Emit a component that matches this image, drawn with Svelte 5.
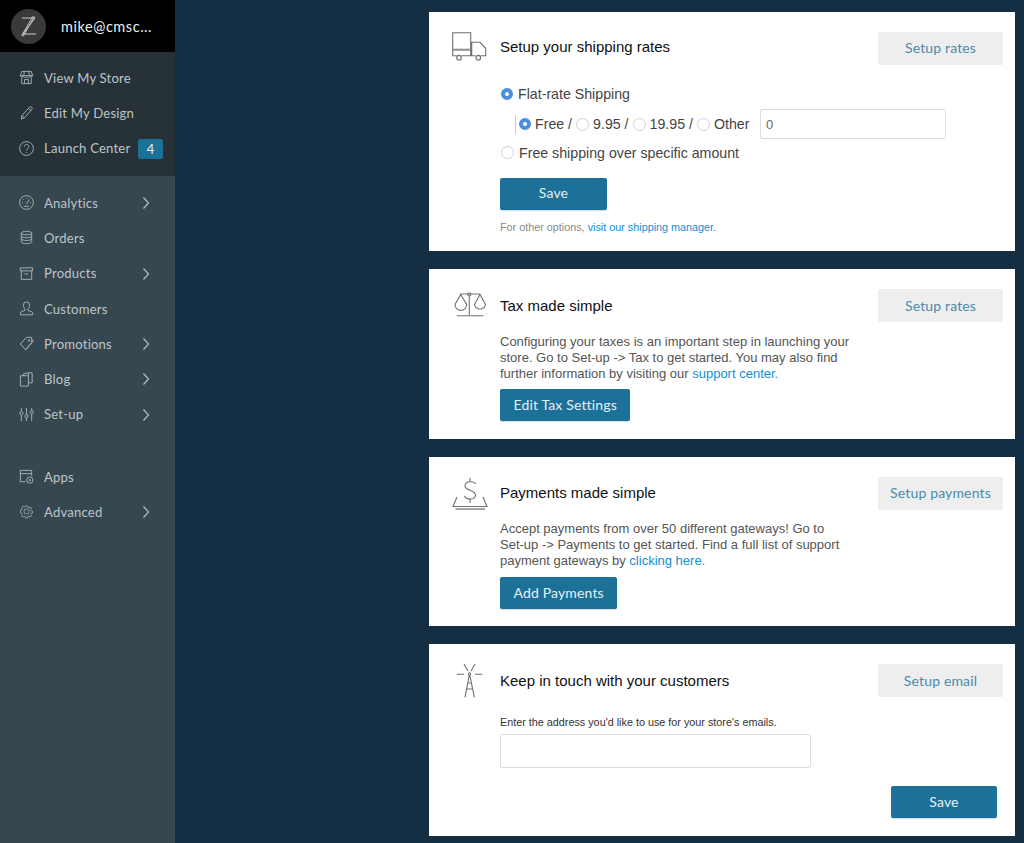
<script>
  const top = [
    { label: 'View My Store', icon: 'store' },
    { label: 'Edit My Design', icon: 'pen' },
    { label: 'Launch Center', icon: 'help', badge: '4' }
  ];
  const mid = [
    { label: 'Analytics', icon: 'gauge', more: true },
    { label: 'Orders', icon: 'db' },
    { label: 'Products', icon: 'box', more: true },
    { label: 'Customers', icon: 'user' },
    { label: 'Promotions', icon: 'tag', more: true },
    { label: 'Blog', icon: 'blog', more: true },
    { label: 'Set-up', icon: 'sliders', more: true }
  ];
  const low = [
    { label: 'Apps', icon: 'apps' },
    { label: 'Advanced', icon: 'gear', more: true }
  ];
  const paths = {
    store: 'M4 2.5h10l1.5 4.5a2 2 0 0 1-3 1 2.2 2.2 0 0 1-3.5 0 2.2 2.2 0 0 1-3.5 0 2 2 0 0 1-3-1zM4 9v6.5h10V9M2.5 7h13M7 15.5V11h4v4.5M6.7 2.5 6 7M11.3 2.5 12 7',
    pen: 'M4 12.5 12 3.5a1.6 1.6 0 0 1 2.6 2.2L7 14.5 3.5 16zM4 12.5l3 2M11 5l3 2.2',
    help: 'M9 1.7a7.3 7.3 0 1 0 0 14.6A7.3 7.3 0 0 0 9 1.7zM6.7 7a2.4 2.4 0 1 1 3.6 2.1c-.9.5-1.3 1-1.3 2M9 12.6v1',
    gauge: 'M9 1.7a7.3 7.3 0 1 0 0 14.6A7.3 7.3 0 0 0 9 1.7zM9 10.5l3-5M9 4v1M4.2 9h1M12.8 9h1M5.5 5.5l.7.7M6.5 13h5',
    db: 'M3.5 4.5C3.5 1.8 14.5 1.8 14.5 4.5v9c0 2.7-11 2.7-11 0zM3.5 4.5c0 2.2 11 2.2 11 0M3.5 7.5c0 2.2 11 2.2 11 0M3.5 10.5c0 2.2 11 2.2 11 0',
    box: 'M2.5 3h13v3.2h-13zM3.5 6.2v9h11v-9M7 9.5h4',
    user: 'M9 2a3.2 3.2 0 0 0-3.2 3.4c0 2 1 3.4 1.7 4v1.5L2.5 13v2.7h13V13l-5-2.1V9.400c.7-.6 1.700-2 1.700-4A3.2 3.2 0 0 0 9 2z',
    tag: 'M2.500 9.500 9 2.500h5.500v5.500l-6.500 7.500zM11.500 5a.8.8 0 1 0 .1 0M14.500 4.500l1.500 2-7 8.500-1.500.8',
    blog: 'M2.500 5h8.500v11H2.500zM6 5V2.800L11 2h4v10.500h-4M11 2v3',
    sliders: 'M3.500 2v4M3.500 9.500V16M9 2v7M9 12.500V16M14.500 2v3M14.500 8.500V16M3.500 6a1.700 1.700 0 1 0 .1 3.400A1.700 1.700 0 0 0 3.500 6zM9 9a1.700 1.700 0 1 0 .1 3.400A1.700 1.700 0 0 0 9 9zM14.500 5a1.700 1.700 0 1 0 .1 3.400A1.700 1.700 0 0 0 14.500 5z',
    apps: 'M8 14.500H2.500V2.500h12v6M2.500 6h12M12.500 9.500a3.300 3.300 0 1 0 .1 6.600 3.300 3.300 0 0 0-.1-6.600zM12.500 12a.8.8 0 1 0 .1 1.600.8.8 0 0 0-.1-1.600z',
    gear: 'M7.800 2h2.400l.4 1.800 1.400.6 1.600-1 1.600 1.700-1 1.500.6 1.500 1.700.4v2.400l-1.700.4-.6 1.400 1 1.600-1.600 1.600-1.600-1-1.400.6-.4 1.700H7.800l-.4-1.700-1.400-.6-1.600 1-1.600-1.600 1-1.600-.6-1.400-1.700-.4V7.500l1.700-.4.600-1.500-1-1.500 1.600-1.700 1.600 1 1.400-.6zM9 5.800a3.200 3.200 0 1 0 .1 6.400A3.200 3.200 0 0 0 9 5.800z'
  };
</script>

{#snippet item(it)}
  <a class="item" href="#top">
    <svg class="ico {it.icon}" viewBox="0 0 18 18"><path d={paths[it.icon]} /></svg>
    <span class="lbl">{it.label}</span>
    {#if it.badge}<span class="badge">{it.badge}</span>{/if}
    {#if it.more}
      <svg class="chev" viewBox="0 0 8 14"><path d="M1.500 1.500 6.500 7l-5 5.500" /></svg>
    {/if}
  </a>
{/snippet}

{#snippet radio(on)}
  <span class="radio" class:on></span>
{/snippet}

<div class="page">
  <aside class="side">
    <div class="head">
      <span class="avatar">
        <svg viewBox="0 0 35 35"><path d="M11 9H24L12 25H25M22 7 10.500 27M23.500 7.500 12 27.500" /></svg>
      </span>
      <span class="mail">mike@cmsc...</span>
    </div>
    <nav class="dark">
      {#each top as it}{@render item(it)}{/each}
    </nav>
    <nav class="mid">
      {#each mid as it}{@render item(it)}{/each}
    </nav>
    <nav class="low">
      {#each low as it}{@render item(it)}{/each}
    </nav>
  </aside>

  <main class="main">
    <section class="card c1">
      <svg class="art" viewBox="0 0 40 30">
        <path d="M2.700.7h18v16.600h-18zM2.700 17.300v6.400h4M11.500 23.700h14M30.800 23.700h4.900v-7.400l-5.700-6h-8.300v13.400M20.700 17.300v6.400" />
        <path class="thick" d="M2.700 18h18" />
        <circle cx="9" cy="25.700" r="2.300" /><circle cx="28.300" cy="25.700" r="2.300" />
      </svg>
      <div class="body">
        <h2>Setup your shipping rates</h2>
        <div class="opts">
          <label class="opt">{@render radio(true)}Flat-rate Shipping</label>
          <div class="sub">
            <div class="rates">
              {@render radio(true)}<span>Free /</span>
              {@render radio(false)}<span>9.95 /</span>
              {@render radio(false)}<span>19.95 /</span>
              {@render radio(false)}<span>Other</span>
            </div>
            <input class="amount" value="0" />
          </div>
          <label class="opt last">{@render radio(false)}Free shipping over specific amount</label>
        </div>
        <button class="primary save1">Save</button>
        <p class="fine">For other options, <a href="#top">visit our shipping manager.</a></p>
      </div>
      <button class="ghost">Setup rates</button>
    </section>

    <section class="card c2">
      <svg class="art" viewBox="0 0 40 30">
        <path d="M10 3h20M19.300 4.500V24M6.700 24.700h26.600M10.700 3.500 5 13.500a5.800 5.800 0 0 0 11.700 0zM30 3.500l-5.500 10a5.600 5.600 0 0 0 11 0z" />
        <circle cx="19.300" cy="3.500" r="1.500" />
      </svg>
      <div class="body">
        <h2>Tax made simple</h2>
        <p class="copy">Configuring your taxes is an important step in launching your store. Go to Set-up -&gt; Tax to get started. You may also find further information by visiting our <a href="#top">support center.</a></p>
        <button class="primary">Edit Tax Settings</button>
      </div>
      <button class="ghost low-text">Setup rates</button>
    </section>

    <section class="card c3">
      <svg class="art" viewBox="0 0 40 34">
        <path d="M25.500 7C24 4 15.500 3.500 15 8.500c-.5 5.500 11 4 10.500 10-.4 5-9.500 4.500-11 .5M20 1v3.500M20 22.500V26M7 20 3 29.500h34L33 20" />
        <path class="thick" d="M5.500 32h29.500" />
      </svg>
      <div class="body">
        <h2>Payments made simple</h2>
        <p class="copy">Accept payments from over 50 different gateways! Go to Set-up -&gt; Payments to get started. Find a full list of support payment gateways by <a href="#top">clicking here.</a></p>
        <button class="primary">Add Payments</button>
      </div>
      <button class="ghost">Setup payments</button>
    </section>

    <section class="card c4">
      <svg class="art" viewBox="0 0 40 38">
        <path d="M15 2l4 7M26 2l-4 7M7.700 12.300H15M26 12.300h7.300M20.300 13 16 35.300M20.800 13l4.500 22.300M18.700 21H22M17.700 27H23.500" />
        <circle cx="20.500" cy="12" r="1.200" />
      </svg>
      <div class="body">
        <h2>Keep in touch with your customers</h2>
        <p class="note">Enter the address you'd like to use for your store's emails.</p>
        <input class="email" />
      </div>
      <button class="ghost low-text">Setup email</button>
      <button class="primary save4">Save</button>
    </section>
  </main>
</div>

<style>
  :global(body) { margin: 0; background: #132d42; }
  .page { display: flex; height: 843px; overflow: hidden; background: #132d42; font-family: "Liberation Sans", Arial, sans-serif; }
  .side { width: 175px; flex: none; display: flex; flex-direction: column; background: #37474f; font-family: Lato, "Noto Sans", sans-serif; }
  .head { height: 52px; flex: none; background: #000; display: flex; align-items: center; gap: 15px; padding-left: 11px; box-sizing: border-box; }
  .avatar { width: 35px; height: 35px; border-radius: 50%; background: #3a3a3a; display: block; }
  .avatar svg { display: block; width: 100%; height: 100%; fill: none; stroke: #c9c9c9; stroke-width: 1; }
  .mail { color: #e8eef2; font-size: 14.500px; letter-spacing: .55px; }
  .dark { background: #263238; height: 124px; box-sizing: border-box; padding-top: 8px; }
  .mid { padding-top: 9px; height: 243px; box-sizing: border-box; }
  .low { padding-top: 40px; }
  .item { display: flex; align-items: center; height: 35.300px; padding-left: 18px; color: #bcc5c9; text-decoration: none; font-size: 13.100px; letter-spacing: .2px; position: relative; }
  .ico { width: 17px; height: 17px; flex: none; margin-right: 9px; fill: none; stroke: #a8b2b7; stroke-width: 1; }
  .ico.gear { transform: scale(.85); }
  .chev { position: absolute; left: 142px; top: 11px; width: 8px; height: 14px; fill: none; stroke: #b5bec3; stroke-width: 1.200; }
  .badge { position: absolute; left: 138px; top: 8px; width: 25px; height: 20px; background: #1c7199; border-radius: 2px; color: #e8f2f7; font-size: 13px; text-align: center; line-height: 20px; }

  .main { margin-left: 254px; width: 586px; padding-top: 12px; display: flex; flex-direction: column; gap: 18px; }
  .card { background: #fff; display: flex; position: relative; box-sizing: border-box; flex: none; }
  .c1 { height: 239px; } .c2 { height: 170px; } .c3 { height: 169px; } .c4 { height: 192px; }
  .art { position: absolute; left: 21px; top: 20px; width: 40px; height: 30px; fill: none; stroke: #707070; stroke-width: 1.100; }
  .thick { stroke: #999; stroke-width: 1.800; }
  .c2 .art { top: 22px; }
  .c3 .art { top: 20px; height: 34px; }
  .c4 .art { top: 18px; left: 20px; height: 38px; }
  .body { margin-left: 71px; flex: 1; min-width: 0; }
  h2 { margin: 0; font-size: 15px; font-weight: 400; color: #111; line-height: 20px; padding-top: 26px; }
  .c1 h2 { padding-top: 25px; }
  .c2 h2, .c4 h2 { padding-top: 27px; }
  .opts { margin-top: 22px; color: #444; font-size: 14.200px; }
  .opt { display: flex; align-items: center; height: 29px; gap: 5px; margin-left: 1px; }
  .opt.last { margin-top: -1px; }
  .sub { display: flex; align-items: center; height: 30px; margin-left: 15px; margin-top: 1px; }
  .rates { display: flex; align-items: center; gap: 4px; border-left: 1px solid #ccc; padding-left: 3px; height: 19px; width: 241px; box-sizing: border-box; }
  .radio { width: 11px; height: 11px; border-radius: 50%; border: 1px solid #ccd3dd; background: #fff; display: block; flex: none; }
  .radio.on { background: #fff; border: 4px solid #4a8fdc; width: 4px; height: 4px; }
  .amount { width: 186px; height: 30px; box-sizing: border-box; border: 1px solid #ddd; border-radius: 2px; padding: 0 5px; font: 13px "Liberation Sans", sans-serif; color: #666; outline: none; margin-left: 4px; }
  button { font-family: Lato, "Noto Sans", sans-serif; font-size: 14px; letter-spacing: .15px; border: 0; border-radius: 2px; cursor: pointer; }
  .primary { background: #1c7199; color: #e6f0f5; height: 32px; padding: 0 13.500px 2px; display: block; box-shadow: 0 1px 1px rgba(0,0,0,.15); }
  .save1 { width: 107px; margin-top: 11px; padding-bottom: 4px; }
  .ghost { position: absolute; right: 12px; top: 20px; width: 125px; height: 33px; background: #eee; color: #4a8bab; padding: 0 0 2px; }
  .ghost.low-text { padding-bottom: 0; }
  .fine { margin: 11px 0 0; font-size: 10.800px; color: #888; }
  a { color: #0f8fd6; text-decoration: none; }
  .copy { margin: 18px 0 0; width: 351px; font-size: 13px; line-height: 16px; color: #555; }
  .copy + .primary { margin-top: 8px; }
  .c2 .copy + .primary { margin-top: 7px; }
  .note { margin: 25px 0 0; font-size: 10.800px; color: #333; }
  .email { display: block; margin-top: 6px; width: 311px; height: 34px; box-sizing: border-box; border: 1px solid #ddd; border-radius: 2px; outline: none; }
  .save4 { position: absolute; left: 462px; top: 142px; width: 106px; }
</style>
